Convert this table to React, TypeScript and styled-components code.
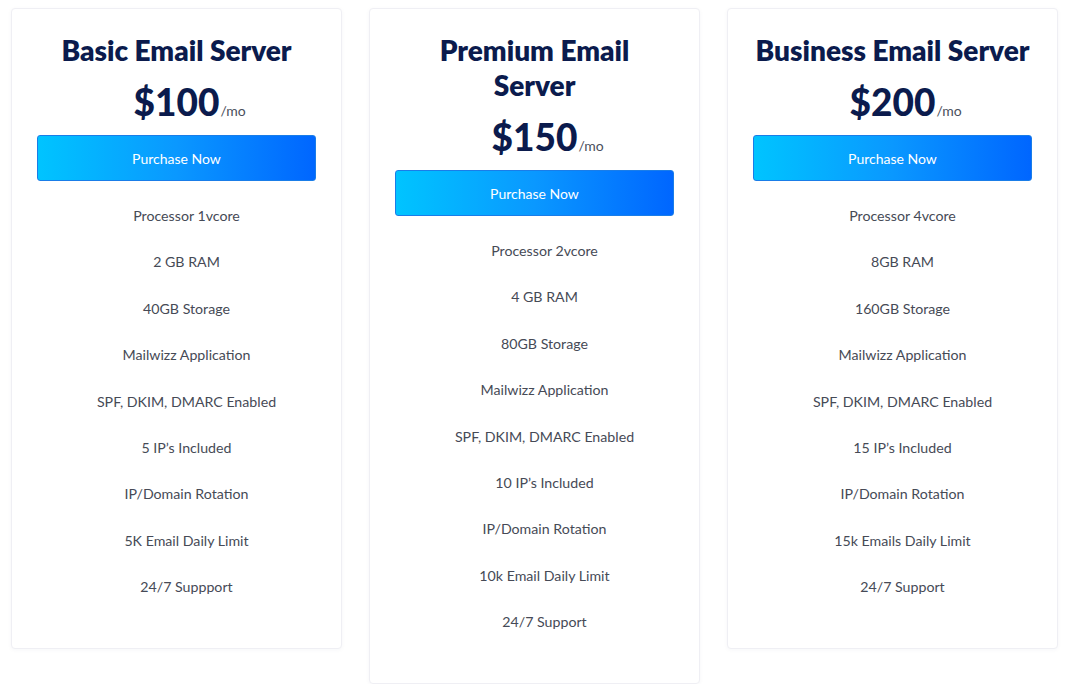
import React from 'react';
import styled, { createGlobalStyle } from 'styled-components';

type PlanType = {
    title: string
    price: string
    features: string[]
}

const plans: PlanType[] = [
    {
        title: 'Basic Email Server',
        price: '$100',
        features: [
            'Processor 1vcore',
            '2 GB RAM',
            '40GB Storage',
            'Mailwizz Application',
            'SPF, DKIM, DMARC Enabled',
            '5 IP’s Included',
            'IP/Domain Rotation',
            '5K Email Daily Limit',
            '24/7 Suppport',
        ],
    },
    {
        title: 'Premium Email\nServer',
        price: '$150',
        features: [
            'Processor 2vcore',
            '4 GB RAM',
            '80GB Storage',
            'Mailwizz Application',
            'SPF, DKIM, DMARC Enabled',
            '10 IP’s Included',
            'IP/Domain Rotation',
            '10k Email Daily Limit',
            '24/7 Support',
        ],
    },
    {
        title: 'Business Email Server',
        price: '$200',
        features: [
            'Processor 4vcore',
            '8GB RAM',
            '160GB Storage',
            'Mailwizz Application',
            'SPF, DKIM, DMARC Enabled',
            '15 IP’s Included',
            'IP/Domain Rotation',
            '15k Emails Daily Limit',
            '24/7 Support',
        ],
    },
];

const GlobalStyle = createGlobalStyle`
  body {
    margin: 0;
    background: #ffffff;
    font-family: "Lato", "Liberation Sans", sans-serif;
  }
`;

const PlanCard = (props: PlanType) => {
    return (
        <Card>
            <Title>{props.title}</Title>
            <PriceRow>
                <Price>{props.price}</Price>
                <Period>/mo</Period>
            </PriceRow>
            <Button>Purchase Now</Button>
            <Features>
                {props.features.map((f) => (
                    <Feature key={f}>{f}</Feature>
                ))}
            </Features>
        </Card>
    );
};

export default function App() {
    return (
        <>
            <GlobalStyle/>
            <Page>
                {plans.map((p) => (
                    <PlanCard key={p.title} {...p}/>
                ))}
            </Page>
        </>
    );
}

const Page = styled.div`
  display: flex;
  align-items: flex-start;
  gap: 27px;
  padding: 8px 0 0 11px;
`;

const Card = styled.div`
  width: 331px;
  box-sizing: border-box;
  padding: 24px 0 37px;
  background: #fff;
  border: 1px solid #efeff4;
  border-radius: 4px;
  box-shadow: 0 1px 4px rgba(30, 40, 90, 0.04);
  display: flex;
  flex-direction: column;
  align-items: stretch;
`;

const Title = styled.h2`
  margin: 0;
  text-align: center;
  white-space: pre-line;
  font-family: "Lato", sans-serif;
  font-weight: 800;
  font-size: 28px;
  line-height: 35px;
  color: #0b1b4d;
  padding: 0 8px;
`;

const PriceRow = styled.div`
  display: grid;
  grid-template-columns: 1fr auto 1fr;
  align-items: baseline;
  margin-top: 11px;
  height: 45px;
`;

const Price = styled.span`
  grid-column: 2;
  font-family: "Lato", sans-serif;
  font-weight: 900;
  font-size: 37px;
  line-height: 45px;
  color: #0b1b4d;
`;

const Period = styled.span`
  grid-column: 3;
  justify-self: start;
  font-size: 14px;
  color: #4a4f5c;
  margin-left: 1px;
`;

const Button = styled.button`
  margin: 11px 25px 0;
  height: 46px;
  border: 1px solid #1a7de8;
  border-radius: 3px;
  background: linear-gradient(90deg, #00c4ff 0%, #0a98ff 50%, #0066ff 100%);
  color: #fff;
  font-family: "Lato", sans-serif;
  font-size: 14px;
  cursor: pointer;
`;

const Features = styled.ul`
  list-style: none;
  margin: 12px 0 0;
  padding: 0 0 0 20px;
`;

const Feature = styled.li`
  text-align: center;
  font-size: 14.2px;
  line-height: 46.4px;
  color: #464a56;
`;
